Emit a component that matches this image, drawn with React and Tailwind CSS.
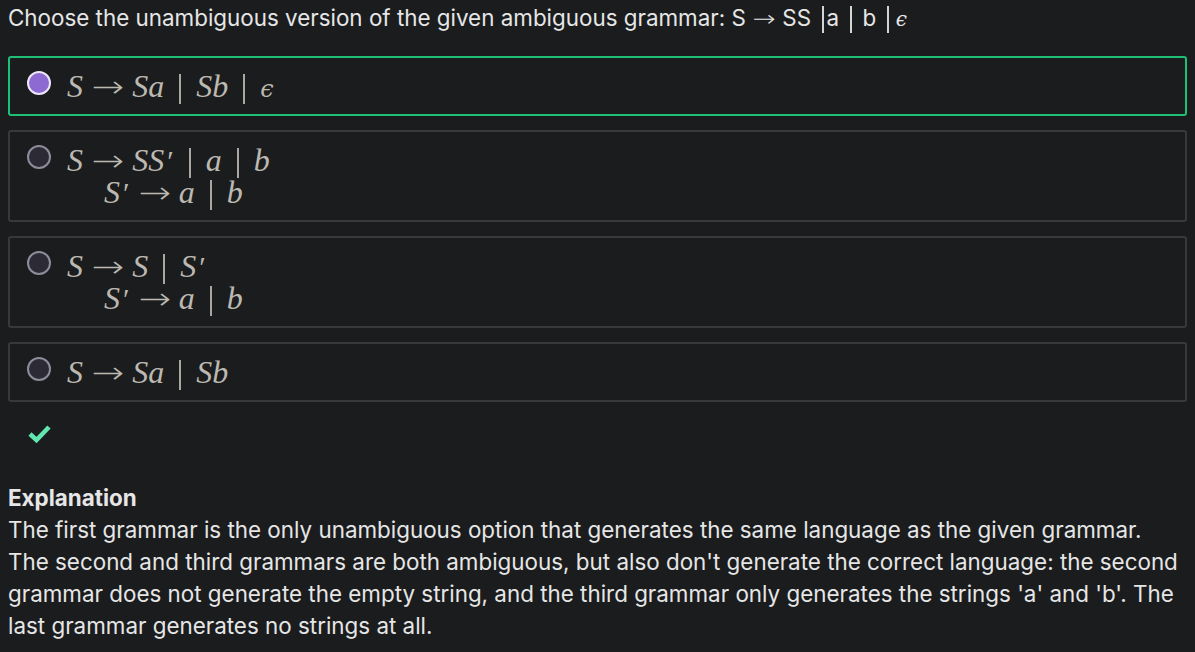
import React from 'react';

// ── Math pieces ───────────────────────────────────────────────────────────────
const V = ({ children }) => <span className="italic">{children}</span>;
const Arrow = () => (
  <span className="inline-block mx-[12px] not-italic font-['DejaVu_Sans',sans-serif] font-extralight text-[30px] leading-none scale-x-[1.3]">→</span>
);
const Bar = () => (
  <span className="inline-block mx-[15px] w-[2px] h-[30px] bg-[#a9a7a0] align-[-7px]" />
);
const Prime = () => (
  <span className="inline-block not-italic leading-none ml-[3px] font-['Liberation_Serif',serif] text-[30px]">′</span>
);

function MathLine({ children, indent }) {
  return (
    <div className={`h-[32px] leading-[32px] whitespace-nowrap ${indent ? 'pl-[37px]' : ''}`}>
      {children}
    </div>
  );
}

// ── Radio ─────────────────────────────────────────────────────────────────────
function Radio({ checked }) {
  return checked ? (
    <span className="mt-[1px] w-[24px] h-[24px] rounded-full border-[2px] border-[#ede6fb] bg-[#8d69d2] flex-shrink-0" />
  ) : (
    <span className="mt-[1px] w-[24px] h-[24px] rounded-full border-[2px] border-[#8e8c9a] bg-[#2b2a35] flex-shrink-0" />
  );
}

function Option({ checked, lines }) {
  return (
    <div
      className={`flex items-start gap-[16px] px-[17px] py-[12px] rounded-[3px] border-[2px]
        ${checked ? 'border-[#1fbf75]' : 'border-[#38393c]'}`}
    >
      <Radio checked={checked} />
      <div className="text-[32px] text-[#bcb9b1] font-['Liberation_Serif',serif]">
        {lines.map((l, i) => (
          <MathLine key={i} indent={i > 0}>{l}</MathLine>
        ))}
      </div>
    </div>
  );
}

const options = [
  {
    checked: true,
    lines: [
      <>
        <V>S</V><Arrow /><V>Sa</V><Bar /><V>Sb</V><Bar />
        <span className="italic font-['DejaVu_Serif',serif] text-[24px]">ϵ</span>
      </>,
    ],
  },
  {
    lines: [
      <><V>S</V><Arrow /><V>SS</V><Prime /><Bar /><V>a</V><Bar /><V>b</V></>,
      <><V>S</V><Prime /><Arrow /><V>a</V><Bar /><V>b</V></>,
    ],
  },
  {
    lines: [
      <><V>S</V><Arrow /><V>S</V><Bar /><V>S</V><Prime /></>,
      <><V>S</V><Prime /><Arrow /><V>a</V><Bar /><V>b</V></>,
    ],
  },
  {
    lines: [<><V>S</V><Arrow /><V>Sa</V><Bar /><V>Sb</V></>],
  },
];

export default function App() {
  return (
    <div className="min-h-[652px] bg-[#1b1c1e] px-[8px] pt-[2px] font-['Inter',sans-serif] text-[#e6e6e6]">
      <p className="text-[22.4px] leading-[32px] whitespace-nowrap">
        Choose the unambiguous version of the given ambiguous grammar: S
        <span className="inline-block mx-[9px] font-['DejaVu_Sans',sans-serif] font-extralight text-[22px] leading-none scale-x-[1.25]">→</span>SS
        <span className="inline-block ml-[11px] mr-[3px] w-[1.5px] h-[27px] bg-[#d4d4d4] align-[-7px]" />a
        <span className="inline-block mx-[11px] w-[1.5px] h-[27px] bg-[#d4d4d4] align-[-7px]" />b
        <span className="inline-block ml-[11px] mr-[7px] w-[1.5px] h-[27px] bg-[#d4d4d4] align-[-7px]" />
        <span className="italic font-['DejaVu_Serif',serif] text-[20px]">ϵ</span>
      </p>

      <div className="mt-[21px] flex flex-col gap-[14px]">
        {options.map((o, i) => (
          <Option key={i} checked={o.checked} lines={o.lines} />
        ))}
      </div>

      <div className="mt-[20px] pl-[19px]">
        <svg width="26" height="22" viewBox="0 0 26 22">
          <path d="M3 12 L9.5 18 L22 5" fill="none" stroke="#62e6b0" strokeWidth="4.5" strokeLinejoin="miter" />
        </svg>
      </div>

      <div className="mt-[38px] text-[22.4px] leading-[32px]">
        <p className="font-bold">Explanation</p>
        <p>
          The first grammar is the only unambiguous option that generates the same language as the given grammar. The second and third grammars are both ambiguous, but also don't generate the correct language: the second grammar does not generate the empty string, and the third grammar only generates the strings 'a' and 'b'. The last grammar generates no strings at all.
        </p>
      </div>
    </div>
  );
}
